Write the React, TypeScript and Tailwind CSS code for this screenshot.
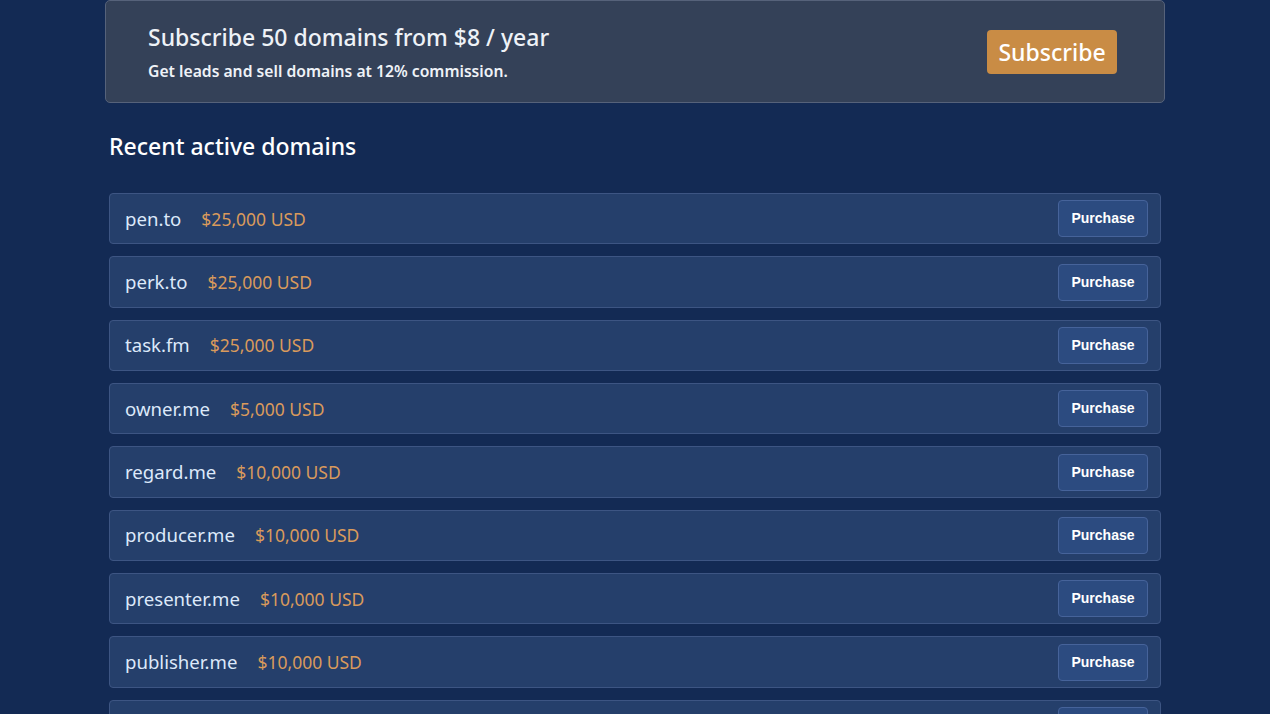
import React from "react";

const domains: [string, string][] = [
  ["pen.to", "$25,000 USD"],
  ["perk.to", "$25,000 USD"],
  ["task.fm", "$25,000 USD"],
  ["owner.me", "$5,000 USD"],
  ["regard.me", "$10,000 USD"],
  ["producer.me", "$10,000 USD"],
  ["presenter.me", "$10,000 USD"],
  ["publisher.me", "$10,000 USD"],
  ["podcaster.me", "$10,000 USD"],
];

export default function App() {
  return (
    <div
      className="h-[714px] w-full overflow-hidden bg-[#132a54]"
      style={{ fontFamily: '"Noto Sans", "Open Sans", sans-serif' }}
    >
      <div className="ml-[105px] w-[1060px]">
        <div className="flex h-[103px] items-center justify-between rounded-[5px] border border-[#56627a] bg-[#344158] pl-[42px] pr-[47px]">
          <div className="flex flex-col">
            <div className="text-[23px] font-medium leading-[30px] text-[#eef2f7]">
              Subscribe 50 domains from $8 / year
            </div>
            <div className="mt-[9px] text-[15.7px] font-semibold leading-[20px] text-[#eef2f7]">
              Get leads and sell domains at 12% commission.
            </div>
          </div>
          <button className="flex h-[44px] w-[130px] items-center justify-center rounded-[4px] bg-[#c98c45] pt-[2px] text-[23px] font-medium text-white">
            Subscribe
          </button>
        </div>

        <div className="px-[4px]">
          <h2 className="mt-[28px] text-[23px] font-medium leading-[30px] text-white">
            Recent active domains
          </h2>
          <div className="mt-[32px] flex flex-col gap-[12px]">
            {domains.map(([name, price]) => (
              <div
                key={name}
                className="flex h-[51.35px] items-center justify-between rounded-[4px] border border-[#3d5583] bg-[#253f6b] pl-[15px] pr-[12px]"
              >
                <div className="flex items-center gap-[20px]">
                  <span className="text-[18.6px] text-[#dde9fa]">{name}</span>
                  <span className="text-[17.5px] text-[#d99a5c]">{price}</span>
                </div>
                <button
                  className="flex h-[37px] w-[90px] items-center justify-center rounded-[4px] border border-[#46639a] bg-[#2c4b80] text-[14px] font-bold text-white"
                  style={{ fontFamily: '"Liberation Sans", Arial, sans-serif' }}
                >
                  Purchase
                </button>
              </div>
            ))}
          </div>
        </div>
      </div>
    </div>
  );
}
